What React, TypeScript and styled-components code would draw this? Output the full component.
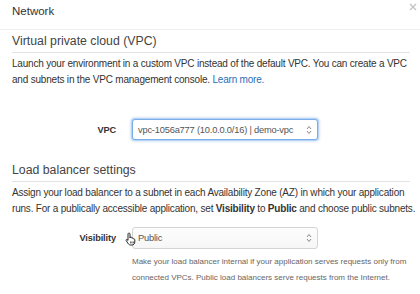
import React from "react";
import styled, { createGlobalStyle } from "styled-components";

const Global = createGlobalStyle`
  html, body { margin: 0; padding: 0; background: #fff; }
  body { font-family: "Liberation Sans", Arial, Helvetica, sans-serif; color: #333; }
  * { box-sizing: border-box; }
`;

const Dialog = styled.div`
  width: 420px;
  height: 294px;
  background: #fff;
  overflow: hidden;
`;

const Header = styled.div`
  height: 30px;
  padding: 0 12px;
  display: flex;
  align-items: flex-start;
  justify-content: space-between;
  border-bottom: 1px solid #f0f0f0;
`;

const Title = styled.div`
  font-size: 11.5px;
  line-height: 16px;
  padding-top: 3px;
  color: #333;
`;

const Close = styled.div`
  margin-top: 3px;
  margin-right: -9px;
  width: 8px;
  height: 8px;
  display: flex;
`;

const Body = styled.div`
  padding: 0 10px 0 12px;
`;

const Section = styled.section<{ $top: number }>`
  margin-top: ${(p) => p.$top}px;
`;

const SectionTitle = styled.h3`
  margin: 0;
  font-size: 12.3px;
  font-weight: normal;
  line-height: 17px;
  color: #444;
  padding-bottom: 2px;
  border-bottom: 1px solid #e3e3e3;
`;

const Para = styled.p`
  margin: 3px 0 0;
  font-size: 10px;
  line-height: 16px;
  color: #333;
  letter-spacing: -0.2px;
  white-space: nowrap;
  b { font-weight: bold; }
`;

const Link = styled.a`
  color: #2a6fb8;
  text-decoration: none;
`;

const FormRow = styled.div<{ $top: number }>`
  margin-top: ${(p) => p.$top}px;
  display: grid;
  grid-template-columns: 104px 186px;
  column-gap: 16px;
  align-items: center;
`;

const Label = styled.div`
  font-size: 9.2px;
  font-weight: bold;
  color: #333;
  text-align: right;
  letter-spacing: -0.1px;
`;

const SelectBox = styled.div<{ $focused?: boolean }>`
  position: relative;
  height: ${(p) => (p.$focused ? 21 : 22)}px;
  display: flex;
  align-items: center;
  justify-content: space-between;
  padding: 0 5px 0 5px;
  font-size: 9.3px;
  letter-spacing: -0.2px;
  color: #555;
  border-radius: 3px;
  border: 1px solid ${(p) => (p.$focused ? "#7aaee8" : "#d4d4d4")};
  background: ${(p) => (p.$focused ? "#fff" : "linear-gradient(#fdfdfd, #f6f6f6)")};
  box-shadow: ${(p) => (p.$focused ? "0 0 0 1px #b6d3f5, 0 0 3px 1px rgba(102,160,233,0.5)" : "none")};
  white-space: nowrap;
`;

const Helper = styled.div`
  grid-column: 2 / 3;
  width: 280px;
  margin-top: 5px;
  font-size: 8px;
  line-height: 16px;
  color: #666;
  white-space: nowrap;
`;

const Cursor = styled.svg`
  position: absolute;
  left: -8px;
  top: 4px;
`;

const Arrows = () => (
  <svg width="6" height="10" viewBox="0 0 6 10">
    <path d="M1 4 L3 1.5 L5 4" fill="none" stroke="#888" strokeWidth="1" />
    <path d="M1 6 L3 8.5 L5 6" fill="none" stroke="#888" strokeWidth="1" />
  </svg>
);

export default function App() {
  return (
    <>
      <Global />
      <Dialog>
        <Header>
          <Title>Network</Title>
          <Close>
            <svg width="8" height="8" viewBox="0 0 8 8">
              <path d="M1 1 L7 7 M7 1 L1 7" stroke="#c4c4c4" strokeWidth="1.4" />
            </svg>
          </Close>
        </Header>
        <Body>
          <Section $top={3}>
            <SectionTitle>Virtual private cloud (VPC)</SectionTitle>
            <Para>
              Launch your environment in a custom VPC instead of the default VPC. You can create a VPC
              <br />
              and subnets in the VPC management console. <Link href="#">Learn more.</Link>
            </Para>
            <FormRow $top={31}>
              <Label>VPC</Label>
              <SelectBox $focused>
                <span>vpc-1056a777 (10.0.0.0/16) | demo-vpc</span>
                <Arrows />
              </SelectBox>
            </FormRow>
          </Section>
          <Section $top={22}>
            <SectionTitle>Load balancer settings</SectionTitle>
            <Para>
              Assign your load balancer to a subnet in each Availability Zone (AZ) in which your application
              <br />
              runs. For a publically accessible application, set <b>Visibility</b> to <b>Public</b> and choose
              public subnets.
            </Para>
            <FormRow $top={10}>
              <Label>Visibility</Label>
              <SelectBox>
                <span>Public</span>
                <Arrows />
                <Cursor width="12" height="14" viewBox="0 0 12 14">
                  <path
                    d="M3.5 1.2 C4.2 0.8 5 1.2 5 2 L5 6 L5.3 5.2 C5.8 4.7 6.6 5 6.7 5.7 L6.9 6.2 C7.4 5.8 8.2 6 8.3 6.7 L8.4 7 C8.9 6.7 9.8 7 9.8 7.8 L9.8 10 C9.8 11.8 8.6 13 7 13 L5.5 13 C4.3 13 3.6 12.3 3 11.4 L1.2 8.6 C0.8 8 1.3 7.2 2 7.5 L3 8.4 L3 2 C3 1.7 3.2 1.4 3.5 1.2 Z"
                    fill="#fff"
                    stroke="#111"
                    strokeWidth="0.9"
                    strokeLinejoin="round"
                  />
                  <path d="M5.6 9.5 L5.6 11.4 M7 9.5 L7 11.4 M8.4 9.5 L8.4 11.4" stroke="#111" strokeWidth="0.7" />
                </Cursor>
              </SelectBox>
              <Helper>
                Make your load balancer internal if your application serves requests only from
                <br />
                connected VPCs. Public load balancers serve requests from the Internet.
              </Helper>
            </FormRow>
          </Section>
        </Body>
      </Dialog>
    </>
  );
}
